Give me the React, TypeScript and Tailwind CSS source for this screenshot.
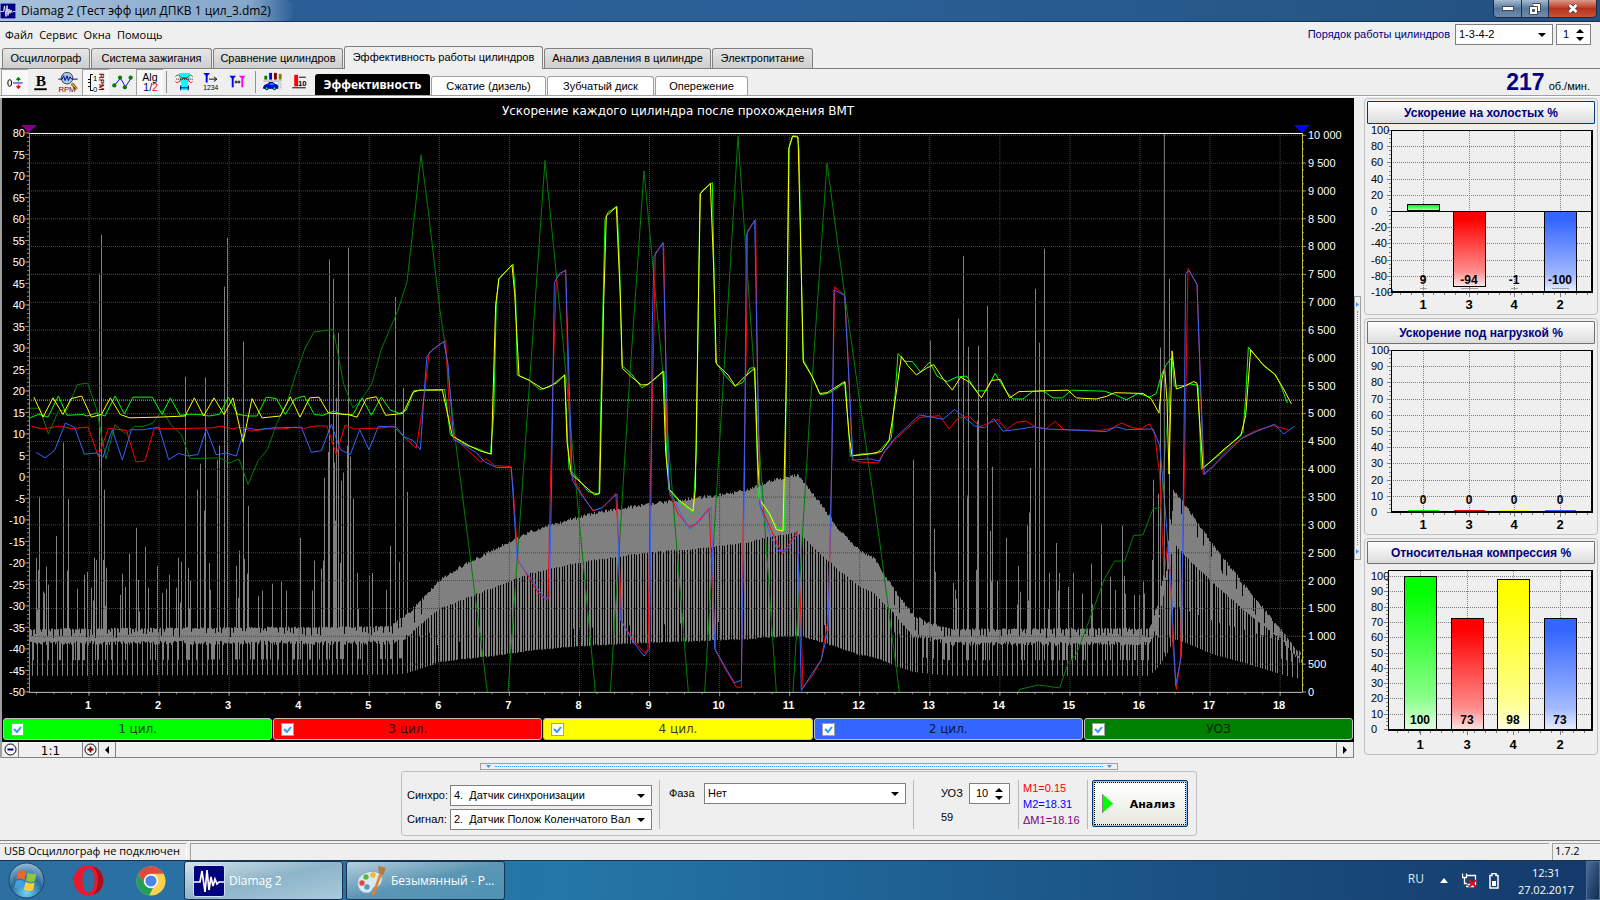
import React, { JSX, useState } from "react";

// Plot units: 210.2 per second on X, 1511 for the full height on Y.
const PLOT = { left: 88, right: 3907, top: 36, bottom: 1547 };

type Point = [number, number];

const points = (offset: number, text: string): Point[] =>
  text.split(" ").map((pair) => {
    const [x, y] = pair.split(",").map(Number);
    return [x + offset, y];
  });

const line = (...parts: Point[][]) =>
  parts
    .flat()
    .map(([x, y], i) => `${i ? "L" : "M"}${x} ${y}`)
    .join("");

const cylinder1 = line(
  points(0, "88,807 118,796 145,804 176,747 202,799 250,797 262,801 290,793 316,801 346,747 374,795 400,750 458,750 487,797 512,752 541,799 570,796 600,797 628,801 660,796 686,750 714,796 745,801 772,801 800,750 830,754 857,797 886,754 914,747 944,797 970,799 1000,788 1028,797 1060,797 1087,752 1115,799 1145,750 1172,785 1200,794 1220,785 1243,732"),
  points(1290, "45,729 62,852 85,865 110,880 145,890 182,904 192,800 200,500 207,430 250,390 258,480 263,690 300,705 330,730 360,722 405,690 418,945 445,970 475,1005 508,1012 520,500 526,270 535,250 562,234 570,400 577,665 605,687 637,725 670,705 703,680 712,940 718,1000 750,1035 790,1062 800,900 806,500 811,200 820,190 848,170 858,655 885,690 915,720 940,710 960,672 975,670 986,1020 1010,1055 1045,1105 1065,1108 1072,500 1077,80 1090,43 1103,45 1108,80 1120,648 1145,690 1172,744 1200,738 1247,710 1262,910"),
  points(2580, "10,903 50,903 95,860 105,760 115,632 135,653 158,654 182,682 210,655 232,693 262,708 290,696 320,693 350,733 380,733 406,686 440,735 460,755 490,755 518,735 550,733 580,752 608,752 636,731 735,734 765,743 800,757 835,740 870,750 890,740 905,690 920,662 937,642 944,720 980,718 990,714 1015,718 1025,945 1045,930 1080,905 1150,845 1158,750 1166,615 1180,630 1215,668 1248,690 1262,715 1283,766")
);

const cylinder4 = line(
  points(0, "103,750 130,804 160,752 190,797 214,754 246,747 275,804 305,797 332,752 362,797 390,806 478,804 556,801 584,752 612,801 643,752 673,797 700,752 730,872 757,754 787,806 842,801 872,749 901,804 930,752 958,750 986,793 1045,797 1072,804 1100,754 1130,749 1158,799 1210,794 1240,737 1260,731"),
  points(1290, "38,731 68,855 120,882 150,895 185,904 198,500 208,430 247,393 255,470 268,692 300,705 340,728 380,712 405,690 412,870 425,958 455,982 495,1014 510,1010 522,500 530,260 560,236 572,480 578,672 605,695 635,717 655,716 700,680 708,900 720,1000 750,1030 790,1058 797,1000 806,500 812,200 842,172 852,400 860,660 895,690 917,720 945,695 975,672 984,920 992,1030 1020,1065 1040,1108 1060,1112 1070,700 1078,75 1088,45 1105,47 1112,300 1121,655 1148,695 1170,740 1192,738 1245,708 1258,850 1267,908"),
  points(2580, "20,905 65,897 88,868 100,800 125,640 145,665 170,690 200,672 222,662 250,700 278,731 303,696 330,710 365,752 395,705 422,702 450,752 478,735 625,731 650,752 710,755 740,748 765,738 850,740 875,755 898,793 907,700 915,672 922,760 928,958 937,625 950,728 975,720 1002,708 1012,712 1030,942 1060,918 1090,893 1143,855 1158,800 1173,622 1210,662 1245,688 1270,725 1295,768")
);

const cylinder3 = line(
  points(0, "95,829 130,836 180,828 215,835 265,831 296,911 326,834 380,840 409,925 436,922 463,836 640,833 665,828 700,836 720,831 757,842 800,836 850,836 880,832 915,834 945,828 982,828 1010,905 1036,826 1065,836 1150,833 1180,828 1210,855 1250,888 1265,800 1275,740 1288,630 1320,608 1338,597"),
  points(1290, "60,800 75,860 110,890 152,925 170,917 195,935 243,938 250,990 265,1192 300,1240 330,1285 355,1300 362,1000 370,700 380,430 408,405 415,700 425,960 455,1010 490,1058 520,1048 558,1010 568,1150 575,1355 610,1405 645,1442 655,1430 662,1000 672,600 677,360 702,333 712,850 720,1010 745,1065 780,1102 800,1092 838,1050 845,1180 858,1435 890,1490 920,1534 935,1534 942,1000 950,600 954,300 978,270 982,600 990,1040 1030,1120 1058,1175 1102,1112 1112,1300 1120,1535 1150,1500 1175,1460 1195,1350 1203,1100 1210,700 1215,452 1245,475 1255,640 1268,920"),
  points(2580, "0,925 55,928 65,910 105,865 180,805 240,800 268,836 297,805 330,803 360,830 415,810 440,838 470,818 500,815 530,832 560,835 587,815 612,838 720,840 755,835 785,820 820,833 845,835 870,822 885,850 900,960 913,1232 923,1155 932,1220 940,1420 950,1540 962,1460 970,1150 978,760 985,402 1012,445 1022,700 1030,958 1060,938 1100,895 1150,858 1190,840 1240,827 1285,838")
);

const cylinder2 = line(
  points(0, "109,899 136,914 165,894 197,820 225,832 254,904 290,901 310,912 338,838 368,920 395,838 430,838 478,831 507,919 537,902 565,909 595,905 620,836 650,906 680,901 710,909 736,832 770,838 820,833 905,831 935,899 965,895 995,824 1022,892 1052,905 1080,838 1108,892 1136,829 1190,831 1215,858 1240,867 1262,892 1275,720 1282,640 1300,620 1332,600"),
  points(1290, "55,660 72,865 100,878 140,900 165,925 200,940 245,940 262,1190 300,1235 345,1295 360,1290 366,960 374,440 390,415 408,408 418,700 428,975 460,1020 490,1056 515,1050 562,1012 572,1350 610,1410 643,1450 660,1430 668,550 673,370 700,332 710,700 718,1000 750,1060 780,1107 805,1090 845,1046 855,1430 890,1485 915,1522 935,1515 944,1000 950,310 975,272 984,700 992,1050 1025,1130 1045,1165 1070,1165 1104,1118 1115,1543 1145,1500 1175,1460 1195,1380 1207,900 1213,460 1245,475 1260,740 1270,920"),
  points(2580, "30,917 60,923 75,895 110,857 180,798 250,810 285,783 345,828 375,833 402,808 430,842 490,835 520,830 560,836 740,843 770,830 800,838 880,836 900,880 912,1000 925,1150 935,1270 948,1530 965,1450 975,700 978,415 988,408 1012,445 1022,700 1034,960 1085,915 1145,862 1190,843 1245,823 1272,850 1303,829")
);

const advance = [
  line(
    points(0, "88,780 120,780 146,849 176,788 202,785 233,716 264,712 290,780 319,917 346,824 377,849 405,829 432,829 460,820 487,785 515,826 545,851 571,916 660,914 690,928 718,917 745,986 775,922 803,892 830,824 862,765 888,690 915,620 943,574 1000,567 1010,610 1032,715 1060,779 1087,755 1117,712 1145,620 1195,515 1222,438 1245,255 1264,95 1285,240 1320,510 1335,600"),
    points(1290, "75,850 173,1547")
  ),
  line(points(1290, "235,1547 346,110 400,600 440,1000 497,1547")),
  line(points(1290, "542,1547 600,700 643,138 700,690 776,1547")),
  line(points(1290, "825,1547 925,45 975,700 1040,1547")),
  line(points(1290, "1090,1547 1140,800 1192,117 1240,440 1290,760 1350,1140 1409,1547")),
  line(points(2580, "476,1547 480,1540 535,1528 600,1536 625,1470 650,1445 690,1350 735,1240 765,1193 795,1193 822,1124 850,1122 880,1052 903,1048 920,850 935,645")),
].join("");

// crankshaft sensor envelope: x, top, solid bottom, deepest bottom
const envelope = [
  [88, 1375, 1416, 1503], [1170, 1368, 1415, 1500], [1220, 1335, 1400, 1497], [1260, 1300, 1365, 1485],
  [1320, 1240, 1320, 1468], [1390, 1200, 1295, 1460], [1490, 1155, 1260, 1450], [1590, 1110, 1225, 1437],
  [1690, 1082, 1205, 1428], [1790, 1058, 1188, 1422], [1890, 1043, 1175, 1417], [1990, 1030, 1165, 1414],
  [2090, 1018, 1158, 1411], [2190, 1007, 1148, 1407], [2250, 995, 1140, 1405], [2310, 973, 1125, 1400],
  [2395, 955, 1115, 1397], [2405, 968, 1122, 1398], [2460, 1030, 1170, 1412], [2520, 1105, 1218, 1430],
  [2580, 1160, 1260, 1448], [2625, 1182, 1280, 1455], [2680, 1260, 1330, 1475], [2740, 1335, 1395, 1492],
  [2780, 1355, 1402, 1497], [2850, 1375, 1418, 1503], [3450, 1372, 1416, 1503], [3480, 1290, 1340, 1475],
  [3505, 1150, 1220, 1440], [3520, 1000, 1150, 1410], [3530, 1005, 1150, 1405], [3560, 1040, 1180, 1415],
  [3640, 1145, 1250, 1445], [3740, 1260, 1330, 1470], [3840, 1370, 1400, 1498], [3890, 1430, 1450, 1510],
  [3910, 1440, 1455, 1510],
];

const spikes = [
  ...points(0, "109,1184 112,1325 115,1217 118,1019 130,1275 133,1280 139,1208 145,1257 169,1125 190,873 202,1219 205,1025 232,1268 253,1230 262,1222 274,1265 280,1300 283,1184 289,1190 298,416 304,311 310,1190 313,1000 316,1314 319,1211 361,1284 367,1227 376,1263 388,1173 409,1103 415,1244 418,1330 436,1154 445,1265 472,1206 487,1279 499,1268 508,1230 529,1265 535,1184 541,1305 544,1195 556,695 565,1211 571,1247 568,1322 592,1000 601,930 613,1057 616,697 628,1198 631,1271 652,919 658,881 673,451 682,319 709,1206 718,1165 715,1292 730,600 733,1187 745,1044 742,1227 775,1287 787,1273 817,1254 844,1248 859,1273 901,1130 937,1273 943,1192 964,1214 970,1192 973,968 985,898 988,378 1000,430 1003,927 1006,1084 1009,752 1015,576 1021,1198 1024,976 1030,954 1042,881 1045,346 1051,911 1060,1025 1072,1225 1075,1322 1108,1233 1117,1225 1159,1271 1171,1152 1186,479 1198,1195 1210,725 1222,1006"),
  ...points(2580, "160,919 211,597 223,1106 226,1222 280,1252 286,1271 289,1295 295,538 310,368 322,1016 325,614 349,1217 352,814 355,611 382,503 391,1111 394,1248 397,938 412,1246 439,1130 475,1206 472,1311 481,1276 502,1095 508,1062 505,1300 511,941 526,457 538,603 553,349 568,1225 565,1322 589,1144 595,1273 598,1225 625,1263 640,1225 667,1281 694,1200 697,1310 724,1092 751,1235 766,1271 787,1098 793,1233 796,1281 823,1285 838,1285 850,1248 853,1281 877,1190 880,973 895,1011 901,616 928,430"),
];

const noise = (n: number) => {
  const v = Math.sin(n * 127.1) * 43758.5453;
  return v - Math.floor(v);
};

const buildSensor = () => {
  let d = "";
  let k = 0;
  for (let i = 0; i < 1273; i++) {
    const x = PLOT.left + 1.5 + i * 3;
    while (k < envelope.length - 2 && envelope[k + 1][0] < x) k++;
    const a = envelope[k];
    const b = envelope[k + 1];
    const t = (x - a[0]) / (b[0] - a[0]);
    const [top, solid, deep] = [1, 2, 3].map((c) => a[c] + (b[c] - a[c]) * t);
    const dense = x > 1300 && x < 2680;
    const idle = solid > 1398;
    let y1 = top + noise(i) * (idle ? (i % 3 ? 5 : 28) : 9);
    let y2 = solid + (idle ? (noise(i + 7) - 0.6) * 12 : noise(i) * 4);
    if (dense) {
      if ((i * 3) % 8 < 5) y2 = noise(i + 3) > 0.93 ? deep - 50 : deep - noise(i) * 3;
    } else if (i % 5 === 3 || (!idle && i % 5 === 1)) {
      y2 = deep;
    } else if (noise(i + 11) > 0.78) {
      y2 = idle ? deep - 42 : deep - 90;
    }
    if (!dense && !idle && noise(i + 19) > 0.86) y1 += 40;
    d += `M${x} ${y1.toFixed(0)}V${y2.toFixed(0)}`;
  }
  spikes.forEach(([x, y]) => {
    const column = Math.round((x - PLOT.left) / 3);
    d += `M${PLOT.left + 1.5 + column * 3} ${y}V1400`;
  });
  return d;
};

const sensor = buildSensor();

const range = (n: number) => Array.from({ length: n }, (_, i) => i);

const thousands = (n: number) => (n >= 1000 ? `${Math.floor(n / 1000)} ${String(n % 1000).padStart(3, "0")}` : `${n}`);

function Scope() {
  const stroke = { fill: "none", vectorEffect: "non-scaling-stroke" as const };
  return (
    <svg
      className="block min-h-0 min-w-0 flex-1 overflow-visible"
      viewBox={`${PLOT.left} ${PLOT.top} ${PLOT.right - PLOT.left} ${PLOT.bottom - PLOT.top}`}
      preserveAspectRatio="none"
      shapeRendering="crispEdges"
    >
      <path d={sensor} stroke="#808080" {...stroke} />
      <path
        d={
          range(20).map((i) => `M88 ${42 + i * 75.25}H3907`).join("") +
          range(18).map((i) => `M${268 + i * 210.2} 36V1547`).join("")
        }
        stroke="#484848"
        strokeDasharray="1 1"
        {...stroke}
      />
      <path d={advance} stroke="#008000" {...stroke} />
      <path d={cylinder1} stroke="#00ff00" {...stroke} />
      <path d={cylinder3} stroke="#ff0000" {...stroke} />
      <path d={cylinder4} stroke="#ffff00" {...stroke} />
      <path d={cylinder2} stroke="#3366ff" {...stroke} />
      <path d="M88 758H3907" stroke="#40ffff" strokeDasharray="1 1" {...stroke} />
      <path d="M3494 36V1440" stroke="#808080" {...stroke} />
      <path
        d={
          range(27).map((i) => `M76 ${36 + i * 58.1}H88`).join("") +
          range(131).map((i) => `M82 ${36 + i * 11.62}H88`).join("") +
          range(21).map((i) => `M3907 ${42 + i * 75.25}H3919`).join("") +
          range(81).map((i) => `M3907 ${42 + i * 18.81}H3913`).join("") +
          range(18).map((i) => `M${268 + i * 210.2} 1547V1558`).join("") +
          range(72).map((i) => `M${110.5 + i * 52.55} 1547V1553`).join("")
        }
        stroke="#8a8a8a"
        {...stroke}
      />
      <path d="M88 37.3H3907" stroke="#ffffff" {...stroke} />
      <path d="M88 1548H3907" stroke="#c0c0c0" {...stroke} />
      <path d="M89.5 36V1547" stroke="#40c040" {...stroke} />
      <path d="M3908.5 36V1547" stroke="#c0c040" {...stroke} />
    </svg>
  );
}

const legend = [
  { name: "1 цил.", color: "bg-[#00ff00]" },
  { name: "3 цил.", color: "bg-[#ff0000]" },
  { name: "4 цил.", color: "bg-[#ffff00]" },
  { name: "2 цил.", color: "bg-[#3366ff]" },
  { name: "УОЗ", color: "bg-[#008000]" },
];

function ChartPanel() {
  return (
    <section className="flex min-w-0 flex-1 flex-col border-l-2 border-[#a0a0a0]">
      <div className="flex min-h-0 flex-1 flex-col bg-black">
        <h2 className="h-[27px] pt-[5px] text-center font-['DejaVu_Sans'] text-[12px] leading-[17px] text-white">
          Ускорение каждого цилиндра после прохождения ВМТ
        </h2>
        <div className="flex h-2 justify-between pr-[44px] pl-[19px]">
          <svg className="h-2 w-4" viewBox="0 0 16 8"><path d="M0 0H16L8 8Z" fill="#800080" /></svg>
          <svg className="h-2 w-4" viewBox="0 0 16 8"><path d="M0 0H16L8 8Z" fill="#0000ff" /></svg>
        </div>
        <div className="flex min-h-0 flex-1 text-[11px] leading-[12px] text-white">
          <div className="-my-[6px] flex w-[27px] flex-col justify-between pr-[4px] text-right">
            {range(27).map((i) => (
              <span key={i}>{80 - i * 5}</span>
            ))}
          </div>
          <Scope />
          <div className="-mt-[4px] -mb-[6px] flex w-[52px] flex-col justify-between pl-[6px]">
            {range(21).map((i) => (
              <span key={i}>{thousands(10000 - i * 500)}</span>
            ))}
          </div>
        </div>
        <div className="mr-[52px] ml-[27px] flex h-[26px] pt-[7px] pl-[24px] text-[11px] leading-[12px] font-bold text-white">
          {range(18).map((i) => (
            <span key={i} className="w-[5.61%] shrink-0 text-center">{i + 1}</span>
          ))}
        </div>
        <div className="grid h-[24px] grid-cols-5 gap-px px-px pb-[2px]">
          {legend.map((item) => (
            <label
              key={item.name}
              className={`flex items-center rounded-[3px] border border-[#c0c0c0] pl-[7px] font-['DejaVu_Sans'] text-[12px] text-black/80 ${item.color}`}
            >
              <input type="checkbox" defaultChecked className="peer sr-only" />
              <svg className="size-[13px] border border-[#a0a0a0] bg-white" viewBox="0 0 11 11">
                <path d="M2 5L5 8L9 3" fill="none" stroke="#3399ff" strokeWidth="2" />
              </svg>
              <span className="flex-1 pr-5 text-center">{item.name}</span>
            </label>
          ))}
        </div>
      </div>
      <div className="flex h-4 border-b border-[#808080] bg-[#efefef]">
        <button aria-label="Уменьшить" className="flex w-[17px] items-center justify-center border-r border-[#808080]">
          <svg className="size-[13px]" viewBox="0 0 13 13"><circle cx="6.5" cy="6.5" r="5.5" fill="#fff" stroke="#000" /><path d="M3.5 6.5H9.5" stroke="#000080" strokeWidth="2" /></svg>
        </button>
        <div className="flex w-[63px] items-center justify-center border-t border-white pt-[2px] font-['DejaVu_Sans'] text-[12px] leading-[14px]">1:1</div>
        <button aria-label="Увеличить" className="flex w-[17px] items-center justify-center border-x border-[#808080]">
          <svg className="size-[13px]" viewBox="0 0 13 13"><circle cx="6.5" cy="6.5" r="5.5" fill="#fff" stroke="#000" /><path d="M3.5 6.5H9.5M6.5 3.5V9.5" stroke="#800000" strokeWidth="2" /></svg>
        </button>
        <button aria-label="Влево" className="flex w-[17px] items-center justify-center border-r border-[#808080]">
          <svg className="h-[8px] w-[4px]" viewBox="0 0 4 8"><path d="M4 0V8L0 4Z" /></svg>
        </button>
        <div className="flex-1 border-t border-r border-t-white border-r-[#808080]" />
        <button aria-label="Вправо" className="flex w-[17px] items-center justify-center border-r border-[#808080]">
          <svg className="h-[8px] w-[4px]" viewBox="0 0 4 8"><path d="M0 0V8L4 4Z" /></svg>
        </button>
      </div>
    </section>
  );
}

type Bar = { name: string; value: number; x: number; top: number; bottom: number };

const fills: Record<string, string> = { "1": "#00ff00", "3": "#ff0000", "4": "#ffff00", "2": "#3366ff" };

interface BarChartProps {
  id: string;
  title: string;
  active?: boolean;
  left: number;
  bottom: number;
  first: number;
  step: number;
  ticks: number[];
  bars: Bar[];
  zero?: number;
}

function BarChart({ id, title, active, left, bottom, first, step, ticks, bars, zero }: BarChartProps) {
  return (
    <section className="flex flex-col rounded-[4px] border border-[#c0c0c0] px-[2px] pt-[2px] pb-[2px]">
      <button
        className={`h-[23px] rounded-[1px] border bg-linear-to-b from-white to-[#dcdcdc] text-[12px] font-bold text-[#000080] ${
          active ? "border-[#003c74]" : "border-[#707070]"
        }`}
      >
        {title}
      </button>
      <svg className="h-[188px] w-full" viewBox="0 0 228 188" shapeRendering="crispEdges" fontFamily="Liberation Sans, sans-serif">
        <defs>
          {Object.entries(fills).map(([name, color]) => (
            <linearGradient key={name} id={`${id}-${name}`} x1="0" y1="0" x2="0" y2="1">
              <stop offset="0.1" stopColor={color} />
              <stop offset="0.8" stopColor={color} stopOpacity="0.45" />
              <stop offset="1" stopColor={color} stopOpacity="0.1" />
            </linearGradient>
          ))}
        </defs>
        <path
          d={
            ticks.map((_, i) => `M${left} ${Math.round(first + i * step) + 0.5}H224`).join("") +
            bars.map((bar) => `M${bar.x}.5 7V${bottom}`).join("")
          }
          stroke="#808080"
          strokeDasharray="1 1"
        />
        <path
          d={
            ticks.map((_, i) => `M${left - 4} ${Math.round(first + i * step) + 0.5}h4`).join("") +
            range((ticks.length - 1) * 4).map((i) => `M${left - 2} ${Math.round(first + (i * step) / 4) + 0.5}h2`).join("") +
            range(18).map((i) => `M${left + 9.5 + i * 11} ${bottom}v3`).join("") +
            bars.map((bar) => `M${bar.x}.5 ${bottom}v5`).join("")
          }
          stroke="#808080"
        />
        {ticks.map((tick, i) => (
          <text key={tick} x="4" y={Math.round(first + i * step) + 4} fontSize="11">{tick}</text>
        ))}
        {bars.map((bar) => (
          <g key={bar.name}>
            {bar.value === 0 ? (
              <path d={`M${bar.x - 15} ${bottom - 1.5}h31`} stroke={fills[bar.name]} />
            ) : (
              bar.bottom > bar.top && (
                <g>
                  <rect x={bar.x - 15.5} y={bar.top + 0.5} width="32" height={bar.bottom - bar.top} fill="#fff" />
                  <rect x={bar.x - 15.5} y={bar.top + 0.5} width="32" height={bar.bottom - bar.top} fill={`url(#${id}-${bar.name})`} stroke="#000" />
                </g>
              )
            )}
            {zero && <path d={`M${bar.x - (Math.abs(bar.value) > 90 ? 8 : 3)} ${bottom - 3.5}h${Math.abs(bar.value) > 90 ? 17 : 7}`} stroke="#a0a0a0" />}
          </g>
        ))}
        <path d={`M${left + 0.5} ${bottom}V6.5H225`} fill="none" stroke="#000" />
        <path d={`M${left} ${bottom}H225V6`} fill="none" stroke="#000" strokeWidth="2" />
        {zero && <path d={`M${left} ${zero + 0.5}H224`} stroke="#000" />}
        {bars.map((bar) => (
          <g key={bar.name} fontWeight="bold" textAnchor="middle">
            <text x={bar.x} y={bottom - (bar.value === 0 || zero ? 8 : 6)} fontSize="12">{bar.value}</text>
            <text x={bar.x} y="185" fontSize="13">{bar.name}</text>
          </g>
        ))}
      </svg>
    </section>
  );
}

function SidePanel() {
  return (
    <aside className="flex w-[234px] shrink-0 flex-col gap-[3px] self-start">
      <BarChart
        id="idle" title="Ускорение на холостых %" active left={24} bottom={168} first={6} step={16.2} zero={87}
        ticks={range(11).map((i) => 100 - i * 20)}
        bars={[
          { name: "1", value: 9, x: 56, top: 80, bottom: 86 },
          { name: "3", value: -94, x: 102, top: 87, bottom: 162 },
          { name: "4", value: -1, x: 147, top: 87, bottom: 87 },
          { name: "2", value: -100, x: 193, top: 87, bottom: 167 },
        ]}
      />
      <BarChart
        id="load" title="Ускорение под нагрузкой %" left={24} bottom={168} first={6} step={16.2}
        ticks={range(11).map((i) => 100 - i * 10)}
        bars={[
          { name: "1", value: 0, x: 56, top: 168, bottom: 168 },
          { name: "3", value: 0, x: 102, top: 168, bottom: 168 },
          { name: "4", value: 0, x: 147, top: 168, bottom: 168 },
          { name: "2", value: 0, x: 193, top: 168, bottom: 168 },
        ]}
      />
      <BarChart
        id="comp" title="Относительная компрессия %" left={21} bottom={166} first={12} step={15.3}
        ticks={range(11).map((i) => 100 - i * 10)}
        bars={[
          { name: "1", value: 100, x: 53, top: 12, bottom: 166 },
          { name: "3", value: 73, x: 100, top: 54, bottom: 166 },
          { name: "4", value: 98, x: 146, top: 15, bottom: 166 },
          { name: "2", value: 73, x: 193, top: 54, bottom: 166 },
        ]}
      />
    </aside>
  );
}

const DiamagIcon = ({ className }: { className: string }) => (
  <svg className={className} viewBox="0 0 32 32">
    <rect x="0.5" y="0.5" width="31" height="31" rx="2" fill="#00007e" stroke="#cfe0f0" />
    <path d="M1 17H7L9 6L12 27L14 5L16 25L18 12L20 21L22 14L24 19L26 17H31" fill="none" stroke="#fff" strokeWidth="1.7" />
  </svg>
);

const icons: Record<string, JSX.Element> = {
  zero: (
    <>
      <ellipse cx="7.5" cy="13.5" rx="2" ry="3.5" fill="none" stroke="#000" />
      <path d="M11 13.5H21" stroke="#00f" />
      <path d="M16.5 12V9M14.5 10L16.5 7.500L18.5 10Z" fill="#008000" stroke="#008000" />
      <path d="M16.5 15V18M14.5 17L16.5 19.500L18.5 17Z" fill="#f00" stroke="#f00" />
    </>
  ),
  bold: (
    <>
      <text x="13" y="17" fontSize="16" fontWeight="bold" textAnchor="middle" fontFamily="Liberation Serif, serif">B</text>
      <path d="M6 20H19" stroke="#000" strokeWidth="2" />
    </>
  ),
  rpm: (
    <>
      <circle cx="12" cy="8.500" r="6" fill="#a6caf0" stroke="#404040" />
      <path d="M3 9.500H7L8.500 6L10 11L12 6L13.500 11L15 7L17 9.500H23" fill="none" stroke="#000080" />
      <path d="M17 14L22 20" stroke="#806000" strokeWidth="3" />
      <path d="M17 14L22 20" stroke="#ffe060" />
      <text x="3" y="23" fontSize="8" fill="#800000" fontFamily="Liberation Sans, sans-serif">RPM</text>
    </>
  ),
  axis: (
    <g shapeRendering="crispEdges">
      <path d="M10 4.500H7.500V21.500H10M5 9.500H7M5 13.500H7M5 17.500H7" fill="none" stroke="#000" />
      <text x="10" y="11" fontSize="8" fontFamily="Liberation Sans, sans-serif">1</text>
      <text x="10" y="23" fontSize="8" fontFamily="Liberation Sans, sans-serif">0</text>
      <text x="3.500" y="-16" fontSize="8" fontWeight="bold" fill="#800000" transform="rotate(90)" fontFamily="Liberation Sans, sans-serif">RPM</text>
    </g>
  ),
  points: (
    <>
      <path d="M5.500 15.500L11.500 8.500L16.500 17.500L22.500 8.500" fill="none" stroke="#00f" />
      {["5,16", "11,8", "16,18", "22,8"].map((p) => (
        <circle key={p} cx={p.split(",")[0]} cy={p.split(",")[1]} r="2.200" fill="#008000" />
      ))}
    </>
  ),
  alg: (
    <g fontFamily="Liberation Sans, sans-serif" fontSize="11">
      <text x="5" y="11">Alg</text>
      <text x="6" y="22" fill="#000080">1/</text>
      <text x="15" y="22" fill="#f00">2</text>
    </g>
  ),
  phases: (
    <>
      <path d="M8 3H19V8L17 14V21H10V14L8 8Z" fill="#00ffff" />
      <path d="M4 7C8 2 9 9 13.500 9S19 2 22 7" fill="none" stroke="#008000" />
      <path d="M4 12C8 16 9 8 13.500 8S19 16 22 12" fill="none" stroke="#f00" />
      <path d="M5 9.500H22" stroke="#000" strokeDasharray="1 1" />
      <path d="M9 18.500H18M9.500 16V21M17.500 16V21" stroke="#000080" />
    </>
  ),
  count: (
    <>
      <path d="M5 3H12L8.500 7Z" fill="#00f" />
      <path d="M8.500 5V13" stroke="#00f" strokeWidth="2" />
      <path d="M11 9.500H19M16 7L19 9.500L16 12" fill="none" stroke="#000" />
      <text x="5" y="21" fontSize="7" fontFamily="Liberation Sans, sans-serif">1234</text>
    </>
  ),
  markers: (
    <>
      <path d="M4 6H11L7.500 10Z" fill="#00f" />
      <path d="M7.500 8V18" stroke="#00f" strokeWidth="2" />
      <path d="M14 6H21L17.500 10Z" fill="#f0f" />
      <path d="M17.500 8V18" stroke="#f0f" strokeWidth="2" />
      <path d="M9.500 12.500H15.500M11 11V14M14 11V14" stroke="#000" />
    </>
  ),
  car: (
    <>
      <path d="M4 6H7V10H4Z" fill="#008000" />
      <path d="M9 3H12V10H9Z" fill="#00f" />
      <path d="M14 3H17V10H14Z" fill="#800000" />
      <path d="M19 4H22V10H19Z" fill="#808000" />
      <path d="M3 11.500H22" stroke="#a0a0a0" />
      <path d="M3 19L4 16L7 15L9 13H13L15 15L18 16V19Z" fill="#00f" stroke="#000080" />
      <path d="M9 15L10 14H13L14 15Z" fill="#00ffff" />
      <circle cx="6.500" cy="19" r="1.500" fill="#00ffff" stroke="#000" />
      <circle cx="14.500" cy="19" r="1.500" fill="#00ffff" stroke="#000" />
      <path d="M19 13V20M21 14V20" stroke="#909090" strokeDasharray="1 1" />
    </>
  ),
  bars: (
    <>
      <path d="M7 5H11V17H7Z" fill="#f00" />
      <path d="M5 18.500H19M12 7.500H19" stroke="#000" />
      <text x="11" y="17" fontSize="8" fontWeight="bold" fontFamily="Liberation Sans, sans-serif">10</text>
    </>
  ),
};

const toolGroups = [
  [
    { icon: "zero", label: "Ноль", pressed: true },
    { icon: "bold", label: "Толщина линий" },
    { icon: "rpm", label: "Обороты" },
    { icon: "axis", label: "Шкала", pressed: true },
    { icon: "points", label: "Точки" },
    { icon: "alg", label: "Алгоритм", pressed: true },
  ],
  [
    { icon: "phases", label: "Фазы" },
    { icon: "count", label: "Нумерация" },
    { icon: "markers", label: "Маркеры" },
  ],
  [
    { icon: "car", label: "Отчёт" },
    { icon: "bars", label: "Столбцы" },
  ],
];

const mainTabs = [
  { name: "Осциллограф", width: "w-[88px]" },
  { name: "Система зажигания", width: "w-[121px]" },
  { name: "Сравнение цилиндров", width: "w-[130px]" },
  { name: "Эффективность работы цилиндров", width: "w-[199px]" },
  { name: "Анализ давления в цилиндре", width: "w-[167px]" },
  { name: "Электропитание", width: "w-[101px]" },
];

const subTabs = [
  { name: "Эффективность", width: "w-[115px]" },
  { name: "Сжатие (дизель)", width: "w-[115px]" },
  { name: "Зубчатый диск", width: "w-[107px]" },
  { name: "Опережение", width: "w-[93px]" },
];

function Dropdown({ id, width, value }: { id: string; width: string; value: string }) {
  return (
    <div className={`flex h-[21px] items-center border border-[#808080] bg-white ${width}`}>
      <select id={id} className="h-full min-w-0 flex-1 appearance-none pb-px pl-[3px] text-[11px] outline-none">
        <option>{value}</option>
      </select>
      <svg className="mx-[6px] h-1 w-2" viewBox="0 0 8 4"><path d="M0 0H8L4 4Z" /></svg>
    </div>
  );
}

function Spinner({ id, width, value, label }: { id: string; width: string; value: string; label?: string }) {
  return (
    <div className={`flex h-[21px] items-center border border-[#808080] bg-white ${width}`}>
      <input id={id} aria-label={label} defaultValue={value} className="w-full min-w-0 flex-1 pb-px pl-[6px] text-[11px] outline-none" />
      <div className="mr-[6px] flex w-2 flex-col gap-[4px]">
        <button aria-label="Больше"><svg className="block h-1 w-2" viewBox="0 0 8 4"><path d="M0 4H8L4 0Z" /></svg></button>
        <button aria-label="Меньше"><svg className="block h-1 w-2" viewBox="0 0 8 4"><path d="M0 0H8L4 4Z" /></svg></button>
      </div>
    </div>
  );
}

function TitleBar() {
  return (
    <header className="flex h-[22px] items-start justify-between border-b border-[#1c3050] bg-linear-to-r from-[#2a5c96] via-[#2a6097] to-[#23517f]">
      <div className="flex h-[21px] items-center gap-[5px] rounded-r-full bg-linear-to-r from-[#a9c3dd] via-[#84a6c9] via-85% to-[#2a5d96] pr-6">
        <DiamagIcon className="size-4" />
        <h1 className="font-['Open_Sans'] text-[12px] leading-[20px] text-black">Diamag 2 (Тест эфф цил ДПКВ 1 цил_3.dm2)</h1>
      </div>
      <div className="mr-[3px] flex h-[18px] overflow-hidden rounded-b-[5px] border border-t-0 border-[#1b2c44]">
        <button aria-label="Свернуть" className="flex w-[28px] items-center justify-center border-r border-[#1b2c44] bg-linear-to-b from-[#a8bbd0] via-[#57779d] to-[#6d8cae]">
          <svg className="h-[5px] w-[12px]" viewBox="0 0 12 5"><rect x="0.5" y="0.5" width="11" height="4" fill="#fff" stroke="#404858" /></svg>
        </button>
        <button aria-label="Восстановить" className="flex w-[27px] items-center justify-center border-r border-[#1b2c44] bg-linear-to-b from-[#a8bbd0] via-[#57779d] to-[#6d8cae]">
          <svg className="size-[12px]" viewBox="0 0 12 12"><path d="M3.500 .5H11.500V8.500H9" fill="#fff" stroke="#404858" /><path d="M.5 3.500H8.500V11.500H.5Z" fill="#fff" stroke="#404858" /><path d="M3.500 6.500H5.500V8.500H3.500Z" fill="#57779d" stroke="#404858" /></svg>
        </button>
        <button aria-label="Закрыть" className="flex w-[47px] items-center justify-center bg-linear-to-b from-[#d89a8c] via-[#b8301c] to-[#c65438]">
          <svg className="h-[11px] w-[12px]" viewBox="0 0 12 11"><path d="M2.500 2L9.500 9M9.500 2L2.500 9" stroke="#504048" strokeWidth="4.500" /><path d="M2.500 2L9.500 9M9.500 2L2.500 9" stroke="#fff" strokeWidth="2.600" /></svg>
        </button>
      </div>
    </header>
  );
}

function ControlPanel() {
  return (
    <section className="flex h-[83px] flex-col items-center border-b border-[#808080] pt-[5px] pr-[2px]">
      <button aria-label="Свернуть панель" className="flex h-[7px] w-[638px] items-center gap-1 border border-[#a0a0a0] px-[5px]">
        <svg className="h-[3px] w-[5px]" viewBox="0 0 5 3"><path d="M0 0H5L2.500 3Z" fill="#3399ff" /></svg>
        <span className="h-px flex-1 border-t border-dotted border-[#3399ff]" />
        <svg className="h-[3px] w-[5px]" viewBox="0 0 5 3"><path d="M0 0H5L2.500 3Z" fill="#3399ff" /></svg>
      </button>
      <div className="mt-px flex h-[65px] w-[796px] items-start rounded-[3px] border border-[#c0c0c0] pt-[8px] pl-[5px] text-[11px]">
        <div className="mt-[5px] grid grid-cols-[43px_202px] gap-y-[3px]">
          <label htmlFor="sync" className="leading-[21px]">Синхро:</label>
          <Dropdown id="sync" width="w-[202px]" value={"4.\u00a0 Датчик синхронизации"} />
          <label htmlFor="signal" className="leading-[21px]">Сигнал:</label>
          <Dropdown id="signal" width="w-[202px]" value={"2.\u00a0 Датчик Полож Коленчатого Вала"} />
        </div>
        <div className="ml-[7px] h-[49px] border-l border-[#b8b8b8]" />
        <label htmlFor="phase" className="mt-[3px] ml-[9px] w-[35px] leading-[21px]">Фаза</label>
        <div className="mt-[3px]"><Dropdown id="phase" width="w-[202px]" value="Нет" /></div>
        <div className="ml-[7px] h-[49px] border-l border-[#b8b8b8]" />
        <div className="mt-[3px] ml-[27px] grid grid-cols-[28px_41px] gap-y-[3px]">
          <label htmlFor="uoz" className="leading-[21px]">УОЗ</label>
          <Spinner id="uoz" width="w-[41px]" value="10" />
          <output className="leading-[21px]">59</output>
        </div>
        <div className="ml-[8px] h-[49px] border-l border-[#b8b8b8]" />
        <ul className="w-[68px] pl-1 leading-[16px]">
          <li className="text-[#ff0000]">M1=0.15</li>
          <li className="text-[#0000ff]">M2=18.31</li>
          <li className="text-[#800080]">ΔM1=18.16</li>
        </ul>
        <div className="h-[49px] border-l border-[#b8b8b8]" />
        <button className="ml-[4px] flex h-[47px] w-[96px] items-center rounded-[2px] border border-[#003c74] bg-[#8fbdf0] p-px font-bold">
          <span className="flex h-full w-full items-center border border-dotted border-black bg-linear-to-b from-white to-[#e8e8e0] pl-[7px]">
            <svg className="h-[19px] w-[11px]" viewBox="0 0 11 19"><path d="M.5 0V19L11 9.500Z" fill="#00ff00" /><path d="M.5 0V19" stroke="#808080" /></svg>
            <span className="flex-1 pt-[3px] pl-[7px] text-center font-['DejaVu_Sans'] text-[11px]">Анализ</span>
          </span>
        </button>
      </div>
    </section>
  );
}

function Taskbar() {
  return (
    <footer className="flex h-10 items-stretch border-t border-[#16324e] bg-linear-to-r from-[#2c6ea0] via-[#2476a8] via-35% to-[#14396a] font-['Open_Sans'] text-[12px] text-white">
      <button aria-label="Пуск" className="ml-[8px] flex items-center">
        <svg className="size-[37px]" viewBox="0 0 37 37">
          <defs>
            <radialGradient id="orb" cx="0.5" cy="0.85" r="0.9">
              <stop offset="0" stopColor="#6fd6f5" />
              <stop offset="0.5" stopColor="#2a6c9c" />
              <stop offset="1" stopColor="#a9c6da" />
            </radialGradient>
          </defs>
          <circle cx="18.500" cy="18.500" r="17.500" fill="url(#orb)" stroke="#1c4468" />
          <path d="M10 10Q14 7 18 10L16.500 18Q12.500 15.500 8.500 17.500Z" fill="#f0652a" />
          <path d="M19.500 10.500Q24 13 28.500 11L27 19Q22.500 21 18 18.500Z" fill="#8cc63f" />
          <path d="M8 19Q12 17 16 19.500L14.500 27Q10.500 24.500 6.500 26.500Z" fill="#3fa0e8" />
          <path d="M17.500 20Q22 22.500 26.500 20.500L25 28Q20.500 30 16 27.500Z" fill="#ffcf33" />
        </svg>
      </button>
      <button aria-label="Opera" className="ml-[28px] flex items-center">
        <svg className="size-[31px]" viewBox="0 0 31 31">
          <path fillRule="evenodd" d="M15.500 0.500A15 15 0 1 1 15.400 0.500ZM15.500 3.500C11.500 3.500 9.500 9 9.500 15.500S11.500 27.500 15.500 27.500S21.500 22 21.500 15.500S19.500 3.500 15.500 3.500Z" fill="#e8192c" />
          <path d="M19 1Q30 4 30.500 15.500Q30 27 19 30Q25 26 25 15.500T19 1Z" fill="#a8101c" />
        </svg>
      </button>
      <button aria-label="Chrome" className="ml-[32px] flex items-center">
        <svg className="size-[30px]" viewBox="0 0 30 30">
          <circle cx="15" cy="15" r="14.500" fill="#ffd24d" />
          <path d="M2.400 7.800A14.500 14.500 0 0 1 27.600 7.800H15A7.200 7.200 0 0 0 8.800 18.600Z" fill="#dd4b3e" />
          <path d="M2.400 7.800L8.800 18.600A7.200 7.200 0 0 0 17 21.900L13 29.400A14.500 14.500 0 0 1 2.400 7.800Z" fill="#1fa05a" />
          <circle cx="15" cy="15" r="7" fill="#fff" />
          <circle cx="15" cy="15" r="5.600" fill="#4a86e8" />
        </svg>
      </button>
      <button className="ml-[18px] flex w-[159px] items-center gap-[4px] rounded-[3px] border border-[#16324e] bg-linear-to-br from-[#d4e2ea] via-[#8db4c8] to-[#a9cbdc] pl-[8px]">
        <DiamagIcon className="size-8" />
        Diamag 2
      </button>
      <button className="ml-[3px] flex w-[159px] items-center gap-[4px] rounded-[3px] border border-[#16324e] bg-linear-to-br from-[#b4cfdd] via-[#5b96b4] to-[#4d92b4] pl-[8px]">
        <svg className="size-8" viewBox="0 0 32 32">
          <path d="M3 15C5 7 20 3 26 10C29 15 26 22 20 22C17 22 18 27 13 28C6 29 1 22 3 15Z" fill="#dbe9f4" stroke="#8aaac4" />
          <circle cx="7" cy="18" r="2.700" fill="#e04838" />
          <circle cx="11" cy="12" r="2.700" fill="#58b848" />
          <circle cx="18" cy="10" r="2.700" fill="#f2b630" />
          <circle cx="12" cy="22" r="2.700" fill="#4f9bc4" />
          <path d="M26 8L18 30" stroke="#e08428" strokeWidth="2.500" />
          <path d="M23 1L31 3L28 10L24 8Z" fill="#b87840" />
        </svg>
        Безымянный - P...
      </button>
      <div className="flex-1" />
      <div className="flex items-center">
        <span className="mr-[16px] pb-1 text-[#dce6f2]">RU</span>
        <svg className="mr-[14px] h-[5px] w-[8px]" viewBox="0 0 8 5"><path d="M0 5L4 0L8 5Z" fill="#fff" /></svg>
        <svg className="mr-[12px] size-[15px]" viewBox="0 0 15 15">
          <path d="M4.500 2.500H13.500V11.500H5.500M4 13.500H12M.5 .5V4.500H4.500V.5M2.500 5V10.500H5" fill="none" stroke="#fff" strokeWidth="1.300" />
          <path d="M7 7L14 14M14 7L7 14" stroke="#e01010" strokeWidth="2" />
        </svg>
        <svg className="mr-[19px] h-[16px] w-[10px]" viewBox="0 0 10 16">
          <path d="M3 .5H7V2.500H9V15H1V2.500H3Z" fill="none" stroke="#fff" strokeWidth="1.500" />
          <path d="M3 8H7V13H3Z" fill="#fff" />
        </svg>
        <div className="mr-[12px] text-center text-[11px] leading-[17px]">
          12:31
          <br />
          27.02.2017
        </div>
      </div>
      <button aria-label="Свернуть все окна" className="w-[14px] border border-[#4d6f96] bg-linear-to-br from-[#4a6d96] to-[#0e2c54]" />
    </footer>
  );
}

export default function App() {
  const [tab, setTab] = useState(3);
  const [subTab, setSubTab] = useState(0);

  return (
    <div className="flex min-h-screen flex-col bg-[#efefef] font-['Liberation_Sans',sans-serif] text-black">
      <TitleBar />
      <div className="flex h-[25px] items-center justify-between pr-[9px] pl-[5px]">
        <nav className="flex gap-[6px] pt-px font-['Open_Sans'] text-[11px]">
          {["Файл", "Сервис", "Окна", "Помощь"].map((item) => (
            <button key={item}>{item}</button>
          ))}
        </nav>
        <div className="flex items-center gap-[3px] text-[11px]">
          <label htmlFor="order" className="pr-[2px] text-[#000080]">Порядок работы цилиндров</label>
          <Dropdown id="order" width="w-[98px]" value="1-3-4-2" />
          <Spinner id="count" width="w-[35px]" value="1" label="Номер" />
        </div>
      </div>
      <div className="flex h-[22px] items-end border-b border-[#808080] pl-[2px] text-[11px]" role="tablist">
        {mainTabs.map((item, i) => (
          <button
            key={item.name}
            role="tab"
            aria-selected={tab === i}
            onClick={() => setTab(i)}
            className={`mr-px rounded-t-[3px] border border-b-0 border-[#808080] whitespace-nowrap ${item.width} ${
              tab === i ? "-mb-px h-[23px] bg-[#efefef] pb-[2px]" : "h-[20px] bg-linear-to-b from-[#e6e6e6] to-[#cecece]"
            }`}
          >
            {item.name}
          </button>
        ))}
      </div>
      <div className="flex h-[27px] items-end border-b border-[#a0a0a0] pr-[10px] pl-px">
        {toolGroups.map((group, g) => (
          <div key={g} className="flex h-full items-center">
            {g > 0 && <div className="mr-[4px] ml-[3px] h-[22px] border-l border-[#909090]" />}
            {group.map((tool: { icon: string; label: string; pressed?: boolean }) => (
              <button
                key={tool.icon}
                aria-label={tool.label}
                className={`h-[26px] w-[27px] ${tool.pressed ? "border-t border-l border-[#a0a0a0] bg-[#f8f8f8]" : ""}`}
              >
                <svg className="h-[25px] w-[26px]" viewBox="0 0 26 26">{icons[tool.icon]}</svg>
              </button>
            ))}
          </div>
        ))}
        <div className="ml-px flex items-end text-[11px]" role="tablist">
          {subTabs.map((item, i) => (
            <button
              key={item.name}
              role="tab"
              aria-selected={subTab === i}
              onClick={() => setSubTab(i)}
              className={`mr-px rounded-t-[3px] whitespace-nowrap ${item.width} ${
                subTab === i
                  ? "h-[21px] bg-black font-['Noto_Sans'] text-[12px] font-bold text-white"
                  : "h-[19px] border border-b-0 border-[#a0a0a0] bg-white"
              }`}
            >
              {item.name}
            </button>
          ))}
        </div>
        <div className="ml-auto flex items-baseline gap-1">
          <strong className="text-[23px] leading-[26px] text-[#000080]">217</strong>
          <span className="text-[11px]">об./мин.</span>
        </div>
      </div>
      <main className="flex min-h-0 flex-1 border-t border-white pt-px pr-[2px]">
        <ChartPanel />
        <div className="mr-[3px] flex w-[7px] items-center">
          <button aria-label="Свернуть графики" className="flex h-[264px] w-[7px] flex-col items-center gap-1 border border-[#a0a0a0] py-[5px]">
            <svg className="h-[5px] w-[3px]" viewBox="0 0 3 5"><path d="M0 0L3 2.500L0 5Z" fill="#3399ff" /></svg>
            <span className="w-px flex-1 border-l border-dotted border-[#3399ff]" />
            <svg className="h-[5px] w-[3px]" viewBox="0 0 3 5"><path d="M0 0L3 2.500L0 5Z" fill="#3399ff" /></svg>
          </button>
        </div>
        <SidePanel />
      </main>
      <ControlPanel />
      <div className="flex h-[19px] gap-[3px] pt-[2px] font-['Open_Sans'] text-[11px] leading-[14px]">
        <div className="w-[187px] border-t border-r border-t-[#a0a0a0] border-r-white pl-1">USB Осциллограф не подключен</div>
        <div className="flex-1 border-t border-l border-[#a0a0a0]" />
        <div className="w-[48px] border-t border-l border-[#a0a0a0] pl-[2px]">1.7.2</div>
      </div>
      <Taskbar />
    </div>
  );
}
